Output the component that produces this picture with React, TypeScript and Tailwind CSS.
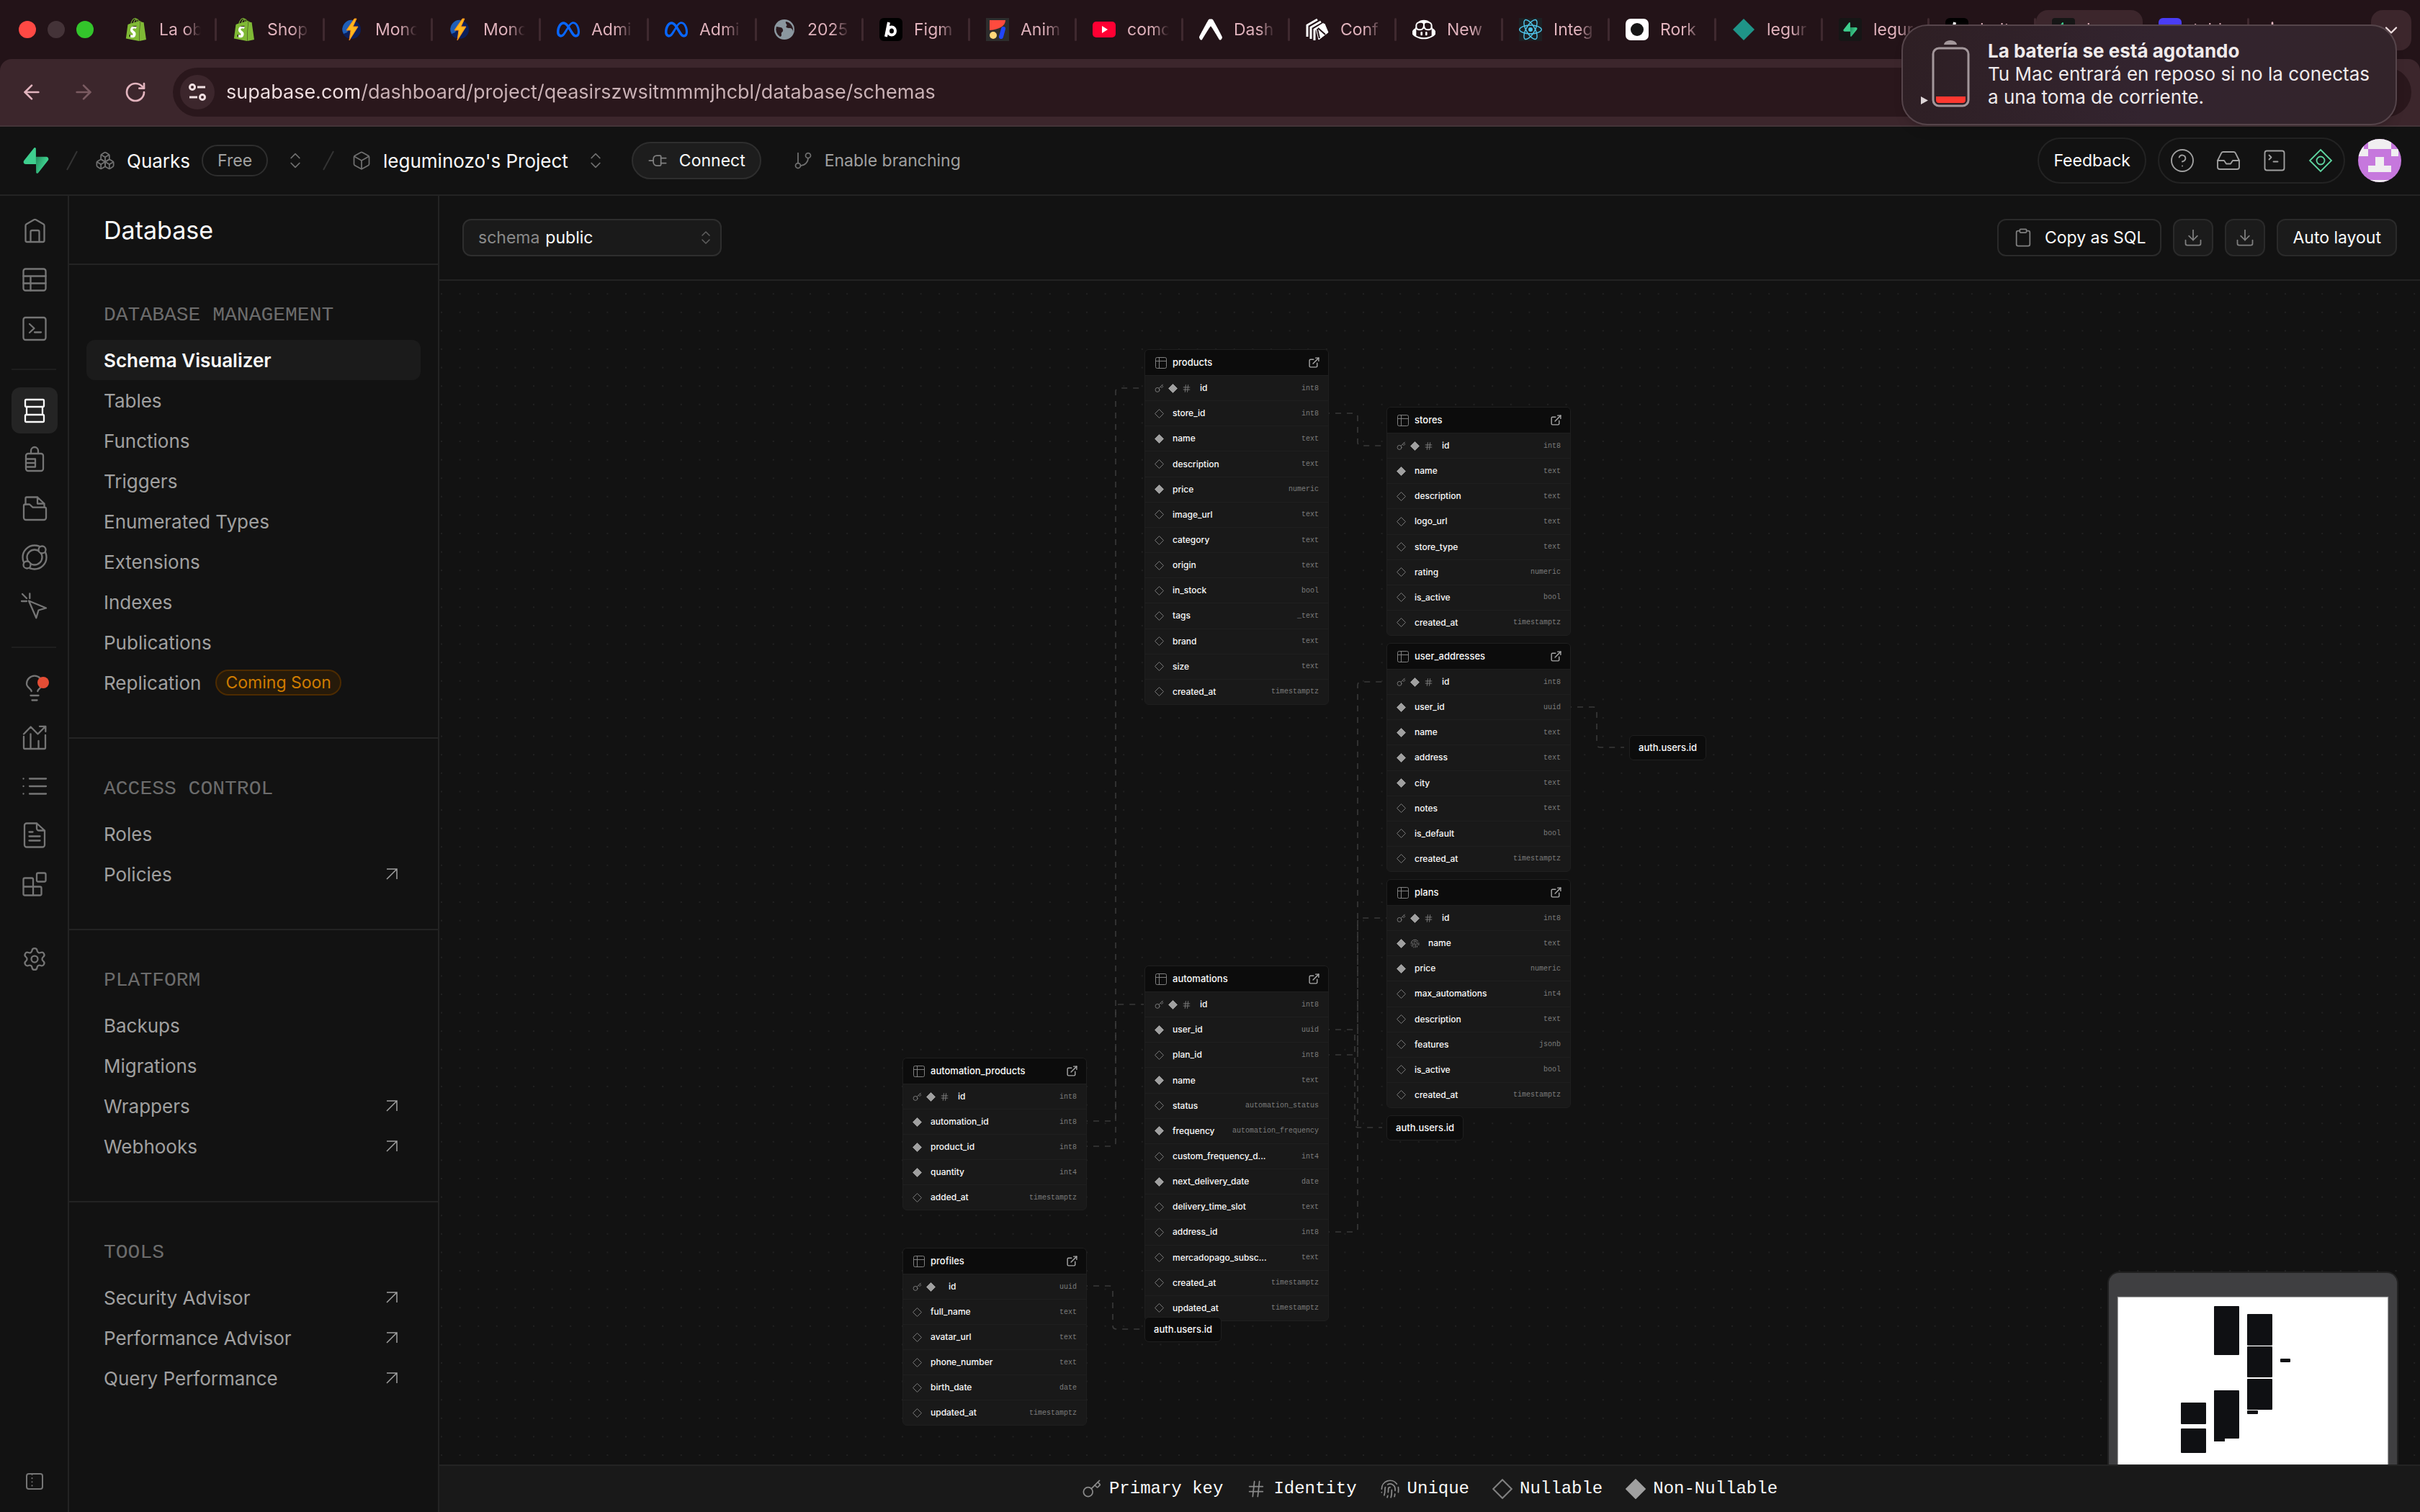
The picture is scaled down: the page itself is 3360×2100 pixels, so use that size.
import React from 'react';
import {
  ArrowLeft,
  ArrowRight,
  Box,
  Boxes,
  ChevronDown,
  ChevronsUpDown,
  CircleHelp,
  Clipboard,
  Download,
  ExternalLink,
  Fingerprint,
  GitBranch,
  Hash,
  Inbox,
  Key,
  Plug,
  Plus,
  RotateCw,
  Settings,
  SquareTerminal,
} from 'lucide-react';
import { SiExpo, SiGithubcopilot, SiMeta, SiReact, SiShopify } from 'react-icons/si';

/* ---------- logos ---------- */

const SupabaseLogo: React.FC<{ className?: string }> = ({ className }) => (
  <svg viewBox="0 0 109 113" className={className} fill="none">
    <path
      d="M63.7 110.3c-2.9 3.6-8.7 1.6-8.7-3L54 40.1h45.2c8.2 0 12.8 9.4 7.7 15.8L63.7 110.3Z"
      fill="url(#supabase-shade)"
    />
    <path
      d="M45.3 2.1c2.9-3.6 8.7-1.7 8.7 2.9l.5 67.3H9.8C1.6 72.3-2.9 62.8 2.2 56.4L45.3 2.1Z"
      fill="#3ecf8e"
    />
    <defs>
      <linearGradient id="supabase-shade" x1="53" y1="55" x2="94" y2="72" gradientUnits="userSpaceOnUse">
        <stop stopColor="#249361" />
        <stop offset="1" stopColor="#3ecf8e" />
      </linearGradient>
    </defs>
  </svg>
);

// White patch shows through the cut-out of the bag
const BagLogo = () => (
  <span className="relative flex size-8 items-center justify-center">
    <span className="absolute left-2 top-3 h-4 w-3 bg-white" />
    <SiShopify className="relative size-8 text-[#7fb935]" />
  </span>
);

const BoltLogo = () => (
  <svg viewBox="0 0 32 32" className="size-8">
    <circle cx="15" cy="16" r="13" fill="#0b1f5c" />
    <path d="M5 8a13 13 0 0 1 12-5L9 20 4 22A13 13 0 0 1 5 8Z" fill="#1f5fb8" />
    <path d="M19 1 8 17h6l-2 14 12-19h-7l5-11Z" fill="#ffb81c" stroke="#f58a1f" strokeWidth="1" />
  </svg>
);

const GlobeLogo = () => (
  <svg viewBox="0 0 32 32" className="size-8">
    <circle cx="16" cy="16" r="14" fill="#8b979f" />
    <path d="M5 12c4 1 8 0 9 4s-3 3-2 7c.5 2-1 3-2 3a12 12 0 0 1-5-14ZM18 5c-1 3 3 4 1 6s1 3 4 3 5 2 5 5a12 12 0 0 0-10-14Z" fill="#2a1a1f" />
  </svg>
);

const LetterLogo = () => (
  <svg viewBox="0 0 32 32" className="size-8">
    <rect width="32" height="32" rx="6" fill="#000" />
    <path d="M13 6 9 26" stroke="#fff" strokeWidth="4" />
    <ellipse cx="17" cy="18" rx="5" ry="5.500" fill="none" stroke="#fff" strokeWidth="4" />
  </svg>
);

const ShapesLogo = () => (
  <svg viewBox="0 0 32 32" className="size-8">
    <rect width="32" height="32" fill="#2d2d2d" />
    <path d="M5 3h22c0 8-9 13-22 14Z" fill="#ff4b3e" />
    <circle cx="10" cy="24" r="5" fill="#ffd77a" />
    <path d="M24 15 21 26" stroke="#2145ff" strokeWidth="6" strokeLinecap="round" />
  </svg>
);

const VideoLogo = () => (
  <svg viewBox="0 0 32 32" className="size-8">
    <rect y="5" width="32" height="22" rx="5" fill="#ff0033" />
    <path d="m13 11 8 5-8 5Z" fill="#fff" />
  </svg>
);

const StripesLogo = () => (
  <svg viewBox="0 0 32 32" className="size-8" fill="none" stroke="#fff" strokeWidth="3">
    <path d="M2 26V10L16 2M7 29V13l14-8M12 31V16l13-8" />
    <path d="m14 14 12-6 5 12-13 10Z" fill="#fff" strokeWidth="1" />
    <path d="m17 14 10 9M19 28l-3-13" stroke="#231318" strokeWidth="2" />
  </svg>
);

const RorkLogo = () => (
  <svg viewBox="0 0 32 32" className="size-8">
    <rect y="1" width="32" height="30" rx="7" fill="#fff" />
    <circle cx="16" cy="16" r="9" fill="#161616" />
  </svg>
);

const DiamondLogo = () => (
  <svg viewBox="0 0 32 32" className="size-8">
    <path d="m16 1 15 15-15 15L1 16Z" fill="#1f9488" />
  </svg>
);

const SupabaseTile = () => (
  <span className="flex size-8 items-center justify-center rounded-sm bg-[#161616]">
    <SupabaseLogo className="size-5" />
  </span>
);

/* ---------- browser chrome ---------- */

interface Tab {
  title: string;
  icon: React.ReactNode;
  active?: boolean;
}

const TABS: Tab[] = [
  { title: 'La ob', icon: <BagLogo /> },
  { title: 'Shop', icon: <BagLogo /> },
  { title: 'Mono', icon: <BoltLogo /> },
  { title: 'Mono', icon: <BoltLogo /> },
  { title: 'Admi', icon: <SiMeta className="size-8 text-[#0866ff]" /> },
  { title: 'Admi', icon: <SiMeta className="size-8 text-[#0866ff]" /> },
  { title: '2025', icon: <GlobeLogo /> },
  { title: 'Figm', icon: <LetterLogo /> },
  { title: 'Anim', icon: <ShapesLogo /> },
  { title: 'como', icon: <VideoLogo /> },
  { title: 'Dash', icon: <SiExpo className="size-8 text-white" /> },
  { title: 'Conf', icon: <StripesLogo /> },
  { title: 'New', icon: <SiGithubcopilot className="size-8 text-white" /> },
  { title: 'Integ', icon: <SiReact className="size-8 bg-[#1c2023] text-[#4fc3e8]" /> },
  { title: 'Rork', icon: <RorkLogo /> },
  { title: 'legur', icon: <DiamondLogo /> },
  { title: 'legur', icon: <SupabaseTile /> },
  { title: 'bolt', icon: <LetterLogo /> },
  { title: 'legu', icon: <SupabaseTile />, active: true },
  { title: 'tabl', icon: <span className="block size-8 rounded-md bg-[#4a3df5]" /> },
];

const TabStrip = () => (
  <div className="flex h-[82px] items-start bg-[#231318] pr-3">
    <div className="flex h-[82px] w-[151px] shrink-0 items-center gap-4 pl-[26px]">
      <span className="size-6 rounded-full bg-[#ff4944]" />
      <span className="size-6 rounded-full bg-[#443338]" />
      <span className="size-6 rounded-full bg-[#33c52b]" />
    </div>
    <div className="flex min-w-0 flex-1" role="tablist">
      {TABS.map((tab, i) => (
        <button
          key={i}
          role="tab"
          aria-selected={!!tab.active}
          className={`mt-[14px] flex h-[54px] shrink-0 items-center ${i < 6 ? 'w-[150px]' : 'w-[148px]'} ${
            tab.active ? 'rounded-2xl bg-[#3c262c]' : ''
          }`}
        >
          <span className="flex flex-1 items-center gap-4 pl-[22px]">
            <span className="shrink-0">{tab.icon}</span>
            <span className="w-[58px] whitespace-nowrap bg-[linear-gradient(90deg,#e2b4be_60%,transparent)] bg-clip-text text-left text-[23px] text-transparent">
              {tab.title}
            </span>
          </span>
          {!tab.active && <span className="h-8 w-[3px] rounded bg-[#3f292f]" />}
        </button>
      ))}
      <button aria-label="New tab" className="mt-[14px] flex h-[54px] w-16 items-center justify-center text-[#e2b4be]">
        <Plus className="size-8" />
      </button>
    </div>
    <button
      aria-label="Search tabs"
      className="mt-[14px] flex size-14 items-center justify-center rounded-2xl bg-[#3c262c] text-[#f0dfe1]"
    >
      <ChevronDown className="size-7" />
    </button>
  </div>
);

const AddressBar = () => (
  <div className="flex h-[94px] items-center gap-9 rounded-t-2xl border-b-2 border-[#443438] bg-[#3c262c] px-3 text-[#e2b4be]">
    <div className="flex shrink-0 items-center gap-10 pl-4">
      <button aria-label="Back">
        <ArrowLeft className="size-8" strokeWidth={2} />
      </button>
      <button aria-label="Forward" className="text-[#7b5b62]">
        <ArrowRight className="size-8" strokeWidth={2} />
      </button>
      <button aria-label="Reload">
        <RotateCw className="size-8" strokeWidth={2} />
      </button>
    </div>
    <div className="flex h-[68px] flex-1 items-center gap-4 rounded-full bg-[#2a171c] pl-[10px]">
      <button
        aria-label="Site information"
        className="flex size-12 shrink-0 items-center justify-center rounded-full bg-[#3c262c] text-[#f0dfe1]"
      >
        <svg viewBox="0 0 28 28" className="size-7" fill="none" stroke="currentColor" strokeWidth="3">
          <circle cx="7" cy="7" r="3.500" />
          <path d="M14 7h11M3 21h11" />
          <circle cx="21" cy="21" r="3.500" />
        </svg>
      </button>
      <input
        aria-label="Address"
        readOnly
        value="supabase.com/dashboard/project/qeasirszwsitmmmjhcbl/database/schemas"
        className="flex-1 bg-[linear-gradient(90deg,#f0dfe1_186px,#cbb3b7_186px)] bg-clip-text text-[27px] text-transparent outline-none"
      />
    </div>
  </div>
);

const BatteryNotification = () => (
  <div
    role="alert"
    className="absolute right-8 top-[34px] flex h-[140px] w-[688px] items-center rounded-[36px] border-2 border-[#56454b] bg-[linear-gradient(100deg,#2e1f24,#33242f_50%,#33242a)] pb-[2px] shadow-lg"
  >
    <svg viewBox="0 0 100 100" className="ml-[14px] h-[100px] w-[100px]" fill="none">
      <path d="m11 81 10 5.500-10 5.500Z" fill="#ddd5d7" />
      <path d="M43 9a9 6 0 0 1 18 0Z" fill="#a3979b" />
      <rect x="28" y="14" width="49" height="80" rx="8" stroke="#a3979b" strokeWidth="3" />
      <path d="M32 81h41v5a4 4 0 0 1-4 4H36a4 4 0 0 1-4-4Z" fill="#ff3830" />
    </svg>
    <div className="ml-1 text-[26px] leading-8 text-[#efeaeb]">
      <p className="font-bold">La batería se está agotando</p>
      <p>
        Tu Mac entrará en reposo si no la conectas
        <br />a una toma de corriente.
      </p>
    </div>
  </div>
);

/* ---------- dashboard header ---------- */

const Slash = () => (
  <svg viewBox="0 0 16 28" className="h-7 w-4" stroke="#333" strokeWidth="2">
    <path d="M15 1 1 27" />
  </svg>
);

const HEADER_BUTTON = 'flex size-16 items-center justify-center text-[#a0a0a0]';

const Avatar = () => (
  <svg viewBox="0 0 60 60" className="ml-[18px] size-[60px] rounded-full">
    <rect width="60" height="60" fill="#c678dd" />
    <path d="M14 0h32v14H14zM0 0h8v24H0zM4 14h10v10H4zM46 14h10v10H46zM24 25h12v12h10v9H14v-9h10zM10 57h40v3H10z" fill="#f0eef0" />
  </svg>
);

const Header = () => (
  <header className="flex h-24 shrink-0 items-center border-b-2 border-[#232323] pl-8 pr-[26px]">
    <SupabaseLogo className="h-9 w-9" />
    <div className="ml-6 flex items-center gap-6">
      <Slash />
      <a href="#org" className="flex items-center gap-4">
        <Boxes className="size-7 text-[#707070]" strokeWidth={1.5} />
        <span className="text-[26px] text-[#fafafa]">Quarks</span>
        <span className="flex h-11 items-center rounded-full border-2 border-[#2e2e2e] px-5 text-[23px] text-[#a0a0a0]">Free</span>
      </a>
      <button aria-label="Switch organization">
        <ChevronsUpDown className="size-7 text-[#707070]" strokeWidth={1.5} />
      </button>
    </div>
    <div className="ml-6 flex items-center gap-4">
      <Slash />
      <a href="#project" className="ml-2 flex items-center gap-4">
        <Box className="size-7 text-[#707070]" strokeWidth={1.5} />
        <span className="text-[26px] text-[#fafafa]">leguminozo's Project</span>
      </a>
      <button aria-label="Switch project" className="ml-2">
        <ChevronsUpDown className="size-7 text-[#707070]" strokeWidth={1.5} />
      </button>
    </div>
    <button className="ml-9 flex h-[52px] items-center gap-4 rounded-full border-2 border-[#2e2e2e] bg-[#1d1d1d] px-5 text-[23px] text-[#fafafa]">
      <Plug className="size-7 rotate-90 text-[#808080]" strokeWidth={1.5} />
      Connect
    </button>
    <button className="ml-11 flex items-center gap-4 text-[23px] text-[#a0a0a0]">
      <GitBranch className="size-7 text-[#707070]" strokeWidth={1.5} />
      Enable branching
    </button>
    <div className="ml-auto flex items-center">
      <button className="flex h-16 items-center rounded-full border-2 border-[#232323] px-5 text-[23px] text-[#fafafa]">
        Feedback
      </button>
      <div className="ml-4 flex h-16 items-center rounded-full border-2 border-[#232323]">
        <button aria-label="Help" className={HEADER_BUTTON}>
          <CircleHelp className="size-9" strokeWidth={1.25} />
        </button>
        <button aria-label="Inbox" className={HEADER_BUTTON}>
          <Inbox className="size-9" strokeWidth={1.25} />
        </button>
        <button aria-label="SQL editor" className={HEADER_BUTTON}>
          <SquareTerminal className="size-9" strokeWidth={1.25} />
        </button>
        <button aria-label="Advisor" className={HEADER_BUTTON}>
          <svg viewBox="0 0 36 36" className="size-9" fill="none" stroke="#5fd6a1" strokeWidth="1.800">
            <path d="M18 3 33 18 18 33 3 18Z" />
            <circle cx="18" cy="18" r="5.500" />
          </svg>
        </button>
      </div>
      <Avatar />
    </div>
  </header>
);

/* ---------- icon rail ---------- */

const RailIcon: React.FC<{ children: React.ReactNode }> = ({ children }) => (
  <svg
    viewBox="0 0 40 40"
    className="size-10"
    fill="none"
    stroke="currentColor"
    strokeWidth="2.300"
    strokeLinecap="round"
    strokeLinejoin="round"
  >
    {children}
  </svg>
);

interface RailItem {
  label: string;
  icon: React.ReactNode;
  active?: boolean;
  alert?: boolean;
}

const RAIL_GROUPS: RailItem[][] = [
  [
    {
      label: 'Home',
      icon: (
        <RailIcon>
          <path d="M7.500 13.500c0-1 .4-1.700 1.200-2.200l10.400-6c.9-.5 1.900-.5 2.800 0l10.400 6c.8.5 1.200 1.200 1.200 2.200V34a2 2 0 0 1-2 2H9.500a2 2 0 0 1-2-2Z" />
          <path d="M14.500 36V22a2 2 0 0 1 2-2h8a2 2 0 0 1 2 2v14" />
        </RailIcon>
      ),
    },
    {
      label: 'Table Editor',
      icon: (
        <RailIcon>
          <rect x="4.500" y="5.500" width="31" height="30" rx="3" />
          <path d="M4.500 15.500h31M4.500 25.500h31M14.500 15.500v20" />
        </RailIcon>
      ),
    },
    {
      label: 'SQL Editor',
      icon: (
        <RailIcon>
          <rect x="4.500" y="5" width="31" height="31" rx="3" />
          <path d="m13 14 6.500 6-6.500 6M20 25.500h9" />
        </RailIcon>
      ),
    },
  ],
  [
    {
      label: 'Database',
      active: true,
      icon: (
        <RailIcon>
          <rect x="7" y="5" width="26" height="10" rx="1.500" />
          <path d="M9 15v11M31 15v11" />
          <rect x="7" y="26" width="26" height="10" rx="1.500" />
        </RailIcon>
      ),
    },
    {
      label: 'Authentication',
      icon: (
        <RailIcon>
          <rect x="8" y="12" width="24" height="24" rx="3" />
          <path d="M15 12V8a5 5 0 0 1 10 0v4M8 19.500h13v11H8M8 25h13" />
        </RailIcon>
      ),
    },
    {
      label: 'Storage',
      icon: (
        <RailIcon>
          <path d="M7.500 14.500V6a1.500 1.500 0 0 1 1.500-1.500h15l9.500 9v5M24 4.500v9h9.500" />
          <path d="M5 16.500a2 2 0 0 1 2-2h6l4.500 4.200H34a2 2 0 0 1 2 2V33a3 3 0 0 1-3 3H8a3 3 0 0 1-3-3Z" />
        </RailIcon>
      ),
    },
    {
      label: 'Edge Functions',
      icon: (
        <RailIcon>
          <circle cx="20" cy="20" r="16.500" />
          <circle cx="20" cy="20" r="10.500" />
          <circle cx="30.500" cy="9.500" r="5" fill="#121212" />
          <circle cx="9.500" cy="30.500" r="5" fill="#121212" />
        </RailIcon>
      ),
    },
    {
      label: 'Realtime',
      icon: (
        <RailIcon>
          <path d="m12 12.500 24 10-10.500 3-3.200 10.700ZM3 3l6 6M13.300 2.500v6.500M2 13h7" />
        </RailIcon>
      ),
    },
  ],
  [
    {
      label: 'Advisors',
      alert: true,
      icon: (
        <RailIcon>
          <path d="M15.700 24C15 20.500 9 18.500 9 13.700a11 11 0 0 1 22 0C31 18.500 25 20.500 24.300 24M14.500 30h11M16.500 36.500h7" />
        </RailIcon>
      ),
    },
    {
      label: 'Reports',
      icon: (
        <RailIcon>
          <path d="M5 19v15.500a1.500 1.500 0 0 0 1.500 1.500h27a1.500 1.500 0 0 0 1.500-1.500V17M14.500 15.500V36M25.500 25v11" />
          <path d="m5 15.500 9.700-10 9.800 10L35 5M27 4.800h8.300V12" />
        </RailIcon>
      ),
    },
    {
      label: 'Logs',
      icon: (
        <RailIcon>
          <path d="M13 9.500h23M13 20h23M13 30.500h23M4.500 9.500h.1M4.500 20h.1M4.500 30.500h.1" />
        </RailIcon>
      ),
    },
    {
      label: 'API Docs',
      icon: (
        <RailIcon>
          <path d="M23 3.500H9a3 3 0 0 0-3 3v27a3 3 0 0 0 3 3h22a3 3 0 0 0 3-3v-20ZM23 3.500v7a3 3 0 0 0 3 3h8" />
          <path d="M12.500 15.500h5M12.500 21.500h15M12.500 27.500h15" />
        </RailIcon>
      ),
    },
    {
      label: 'Integrations',
      icon: (
        <RailIcon>
          <path d="M18 23.500V13.500a2 2 0 0 0-2-2H6.500a2 2 0 0 0-2 2v20a2 2 0 0 0 2 2h21a2 2 0 0 0 2-2v-8a2 2 0 0 0-2-2h-23M18 23.500v12" />
          <rect x="23" y="4.500" width="12.500" height="12" rx="2" />
        </RailIcon>
      ),
    },
  ],
];

const Rail = () => (
  <nav className="flex w-24 shrink-0 flex-col border-r-2 border-[#232323] pb-[10px] pl-4 pt-4 text-[#757575]">
    {RAIL_GROUPS.map((group, i) => (
      <React.Fragment key={i}>
        {i > 0 && <hr className="my-6 mr-4 border-t-2 border-[#1e1e1e]" />}
        <div className="flex flex-col gap-1">
          {group.map((item) => (
            <a
              key={item.label}
              href="#section"
              aria-label={item.label}
              className={`relative flex size-16 items-center justify-center rounded-xl ${item.active ? 'bg-[#242424] text-[#fafafa]' : ''}`}
            >
              {item.icon}
              {item.alert && <span className="absolute right-3 top-4 size-4 rounded-full bg-[#e54d35]" />}
            </a>
          ))}
        </div>
      </React.Fragment>
    ))}
    <a href="#settings" aria-label="Settings" className="mt-10 flex size-16 items-center justify-center">
      <Settings className="size-9" strokeWidth={1.5} />
    </a>
    <button aria-label="Collapse sidebar" className="mt-auto flex size-16 items-center justify-center">
      <RailIcon>
        <rect x="9" y="9" width="22" height="21" rx="3" strokeWidth="2" />
        <path d="M16.500 10v20" strokeWidth="2" strokeDasharray="0.100 5" />
      </RailIcon>
    </button>
  </nav>
);

/* ---------- database menu ---------- */

interface MenuItem {
  label: string;
  active?: boolean;
  external?: boolean;
  badge?: string;
}

const MENU: { title: string; items: MenuItem[] }[] = [
  {
    title: 'Database Management',
    items: [
      { label: 'Schema Visualizer', active: true },
      { label: 'Tables' },
      { label: 'Functions' },
      { label: 'Triggers' },
      { label: 'Enumerated Types' },
      { label: 'Extensions' },
      { label: 'Indexes' },
      { label: 'Publications' },
      { label: 'Replication', badge: 'Coming Soon' },
    ],
  },
  { title: 'Access Control', items: [{ label: 'Roles' }, { label: 'Policies', external: true }] },
  {
    title: 'Platform',
    items: [
      { label: 'Backups' },
      { label: 'Migrations' },
      { label: 'Wrappers', external: true },
      { label: 'Webhooks', external: true },
    ],
  },
  {
    title: 'Tools',
    items: [
      { label: 'Security Advisor', external: true },
      { label: 'Performance Advisor', external: true },
      { label: 'Query Performance', external: true },
    ],
  },
];

const DatabaseMenu = () => (
  <aside className="w-[514px] shrink-0 border-r-2 border-[#232323]">
    <h1 className="flex h-24 items-center border-b-2 border-[#232323] px-12 text-[34px] text-[#fafafa]">Database</h1>
    {MENU.map((section, i) => (
      <section key={section.title} className={`px-6 py-12 ${i > 0 ? 'border-t-2 border-[#232323]' : ''}`}>
        <h2 className="mb-3 px-6 font-['Liberation_Mono',monospace] text-[28px] uppercase leading-[44px] text-[#6c6c6c]">
          {section.title}
        </h2>
        <ul>
          {section.items.map((item) => (
            <li key={item.label}>
              <a
                href="#menu"
                className={`flex h-14 items-center rounded-xl px-6 text-[26px] ${
                  item.active ? 'bg-[#1b1b1b] font-semibold text-[#fafafa]' : 'text-[#a0a0a0]'
                }`}
              >
                {item.label}
                {item.badge && (
                  <span className="ml-5 rounded-full border-2 border-[#4d2b00] bg-[#261a0a] px-3 text-[23px] leading-8 text-[#cf7c00]">
                    {item.badge}
                  </span>
                )}
                {item.external && (
                  <svg viewBox="0 0 16 16" className="ml-auto mr-2 size-4" fill="none" stroke="#a0a0a0" strokeWidth="1.500">
                    <path d="M1 1h14v14M15 1 1 15" />
                  </svg>
                )}
              </a>
            </li>
          ))}
        </ul>
      </section>
    ))}
  </aside>
);

/* ---------- schema graph ---------- */

// k = primary key, # = identity, u = unique, n = nullable, x = non-nullable
type Column = [flags: string, name: string, type: string];

interface TableNode {
  name: string;
  place: string;
  columns: Column[];
}

const TABLES: TableNode[] = [
  {
    name: 'products',
    place: 'left-[979px] top-[95px] h-[494px]',
    columns: [
      ['kx#', 'id', 'int8'],
      ['n', 'store_id', 'int8'],
      ['x', 'name', 'text'],
      ['n', 'description', 'text'],
      ['x', 'price', 'numeric'],
      ['n', 'image_url', 'text'],
      ['n', 'category', 'text'],
      ['n', 'origin', 'text'],
      ['n', 'in_stock', 'bool'],
      ['n', 'tags', '_text'],
      ['n', 'brand', 'text'],
      ['n', 'size', 'text'],
      ['n', 'created_at', 'timestamptz'],
    ],
  },
  {
    name: 'stores',
    place: 'left-[1315px] top-[175px] h-[318px]',
    columns: [
      ['kx#', 'id', 'int8'],
      ['x', 'name', 'text'],
      ['n', 'description', 'text'],
      ['n', 'logo_url', 'text'],
      ['n', 'store_type', 'text'],
      ['n', 'rating', 'numeric'],
      ['n', 'is_active', 'bool'],
      ['n', 'created_at', 'timestamptz'],
    ],
  },
  {
    name: 'user_addresses',
    place: 'left-[1315px] top-[503px] h-[318px]',
    columns: [
      ['kx#', 'id', 'int8'],
      ['x', 'user_id', 'uuid'],
      ['x', 'name', 'text'],
      ['x', 'address', 'text'],
      ['x', 'city', 'text'],
      ['n', 'notes', 'text'],
      ['n', 'is_default', 'bool'],
      ['n', 'created_at', 'timestamptz'],
    ],
  },
  {
    name: 'plans',
    place: 'left-[1315px] top-[831px] h-[318px]',
    columns: [
      ['kx#', 'id', 'int8'],
      ['xu', 'name', 'text'],
      ['x', 'price', 'numeric'],
      ['n', 'max_automations', 'int4'],
      ['n', 'description', 'text'],
      ['n', 'features', 'jsonb'],
      ['n', 'is_active', 'bool'],
      ['n', 'created_at', 'timestamptz'],
    ],
  },
  {
    name: 'automations',
    place: 'left-[979px] top-[951px] h-[494px]',
    columns: [
      ['kx#', 'id', 'int8'],
      ['x', 'user_id', 'uuid'],
      ['n', 'plan_id', 'int8'],
      ['x', 'name', 'text'],
      ['n', 'status', 'automation_status'],
      ['x', 'frequency', 'automation_frequency'],
      ['n', 'custom_frequency_d...', 'int4'],
      ['x', 'next_delivery_date', 'date'],
      ['n', 'delivery_time_slot', 'text'],
      ['n', 'address_id', 'int8'],
      ['n', 'mercadopago_subsc...', 'text'],
      ['n', 'created_at', 'timestamptz'],
      ['n', 'updated_at', 'timestamptz'],
    ],
  },
  {
    name: 'automation_products',
    place: 'left-[643px] top-[1079px] h-[212px]',
    columns: [
      ['kx#', 'id', 'int8'],
      ['x', 'automation_id', 'int8'],
      ['x', 'product_id', 'int8'],
      ['x', 'quantity', 'int4'],
      ['n', 'added_at', 'timestamptz'],
    ],
  },
  {
    name: 'profiles',
    place: 'left-[643px] top-[1343px] h-[247px]',
    columns: [
      ['kx', 'id', 'uuid'],
      ['n', 'full_name', 'text'],
      ['n', 'avatar_url', 'text'],
      ['n', 'phone_number', 'text'],
      ['n', 'birth_date', 'date'],
      ['n', 'updated_at', 'timestamptz'],
    ],
  },
];

const FOREIGN_NODES = ['left-[1652px] top-[631px]', 'left-[1315px] top-[1159px]', 'left-[979px] top-[1439px]'];

// Smooth-step edges, in canvas coordinates
const EDGES = [
  'M892 1202H934Q939 1202 939 1197V154Q939 149 944 149H978',
  'M892 1167H934Q939 1167 939 1162V1010Q939 1005 944 1005H978',
  'M1228 184H1270Q1275 184 1275 189V224Q1275 229 1280 229H1315',
  'M1228 1321H1270Q1275 1321 1275 1316V562Q1275 557 1280 557H1315',
  'M1228 1075H1270Q1275 1075 1275 1070V890Q1275 885 1280 885H1315',
  'M1228 1040H1266Q1271 1040 1271 1045V1171Q1271 1176 1276 1176H1309',
  'M1564 592H1602Q1607 592 1607 597V643Q1607 648 1612 648H1645',
  'M892 1396H930Q935 1396 935 1401V1451Q935 1456 940 1456H973',
];

const ColumnIcon: React.FC<{ flag: string; className: string }> = ({ flag, className }) => {
  if (flag === 'k') return <Key className={`${className} text-[#8a8a8a]`} strokeWidth={1.5} />;
  if (flag === '#') return <Hash className={`${className} text-[#8a8a8a]`} strokeWidth={1.5} />;
  if (flag === 'u') return <Fingerprint className={`${className} text-[#8a8a8a]`} strokeWidth={1.5} />;
  return (
    <svg viewBox="0 0 24 24" className={className} stroke={flag === 'x' ? '#a0a0a0' : '#808080'} strokeWidth="1.800">
      <path d="M12 1 23 12 12 23 1 12Z" fill={flag === 'x' ? '#a0a0a0' : 'none'} />
    </svg>
  );
};

const TableCard: React.FC<{ table: TableNode }> = ({ table }) => (
  <article
    className={`absolute flex w-64 flex-col overflow-hidden rounded-md border border-[#1f1f1f] bg-[#191919] ${table.place}`}
  >
    <h3 className="flex h-[35px] shrink-0 items-center gap-2 bg-[#0c0c0c] pl-[14px] pr-[11px] text-[13px] font-medium text-[#fafafa]">
      <svg viewBox="0 0 16 16" className="size-4" fill="none" stroke="#808080">
        <rect x="0.500" y="0.500" width="15" height="15" rx="2" />
        <path d="M0.500 5.500h15M5.500 .5v15" />
      </svg>
      {table.name}
      <a href="#table" aria-label={`Open ${table.name}`} className="ml-auto">
        <ExternalLink className="size-[17px] text-[#a8a8a8]" strokeWidth={2} />
      </a>
    </h3>
    <ul className="flex flex-1 flex-col">
      {table.columns.map(([flags, name, type]) => (
        <li key={name} className="flex flex-1 items-center border-t border-[#1f1f1f] pr-[13px]">
          <span className={`ml-[13px] mr-3 flex gap-[6px] ${flags[0] === 'k' ? 'min-w-[38px]' : ''}`}>
            {flags.split('').map((flag) => (
              <ColumnIcon key={flag} flag={flag} className="size-[13px]" />
            ))}
          </span>
          <span className="text-[12px] font-medium text-[#fafafa]">{name}</span>
          <span className="ml-auto font-['Liberation_Mono',monospace] text-[10px] text-[#7c7c7c]">{type}</span>
        </li>
      ))}
    </ul>
  </article>
);

const MiniMap = () => (
  <div className="absolute bottom-0 right-[30px] h-[268px] w-[404px] overflow-hidden rounded-t-2xl border-2 border-b-0 border-[#212121] bg-[#3f3f41]">
    <svg viewBox="0 0 1200 798" className="h-[266px] w-[400px]">
      <rect x="37" y="100" width="1126" height="800" fill="#fff" stroke="#999" strokeWidth="3" />
      <g fill="#0f1013">
        <rect x="438" y="138" width="105" height="204" rx="3" />
        <rect x="576" y="171" width="105" height="131" rx="3" />
        <rect x="576" y="306" width="105" height="129" rx="3" />
        <rect x="576" y="441" width="105" height="129" rx="3" />
        <rect x="714" y="357" width="42" height="15" rx="3" />
        <rect x="576" y="573" width="45" height="15" rx="3" />
        <rect x="438" y="489" width="105" height="201" rx="3" />
        <rect x="438" y="680" width="45" height="22" />
        <rect x="300" y="540" width="105" height="90" rx="3" />
        <rect x="300" y="648" width="105" height="102" rx="3" />
      </g>
    </svg>
  </div>
);

const LEGEND = [
  { flag: 'k', label: 'Primary key' },
  { flag: '#', label: 'Identity' },
  { flag: 'u', label: 'Unique' },
  { flag: 'n', label: 'Nullable' },
  { flag: 'x', label: 'Non-Nullable' },
];

const TOOL_BUTTON = 'flex h-[52px] items-center rounded-xl border-2 border-[#2a2a2a] text-[23px] text-[#fafafa]';

const SchemaVisualizer = () => (
  <main className="flex min-w-0 flex-1 flex-col">
    <div className="flex h-[118px] shrink-0 items-center gap-4 border-b-2 border-[#232323] px-8">
      <div className="mr-auto flex h-[52px] w-[360px] items-center gap-2 rounded-xl border-2 border-[#2e2e2e] bg-[#1a1a1a] pl-5 pr-2 text-[23px]">
        <label htmlFor="schema" className="text-[#8a8a8a]">
          schema
        </label>
        <select id="schema" className="flex-1 appearance-none bg-transparent text-[#fafafa] outline-none">
          <option>public</option>
        </select>
        <ChevronsUpDown className="pointer-events-none size-6 text-[#606060]" strokeWidth={1.5} />
      </div>
      <button className={`${TOOL_BUTTON} gap-4 px-5`}>
        <Clipboard className="size-7 text-[#808080]" strokeWidth={1.5} />
        Copy as SQL
      </button>
      <button aria-label="Download SVG" className={`${TOOL_BUTTON} w-14 justify-center bg-[#1b1b1b]`}>
        <Download className="size-7 text-[#808080]" strokeWidth={1.5} />
      </button>
      <button aria-label="Download PNG" className={`${TOOL_BUTTON} w-14 justify-center bg-[#1b1b1b]`}>
        <Download className="size-7 text-[#808080]" strokeWidth={1.5} />
      </button>
      <button className={`${TOOL_BUTTON} bg-[#1b1b1b] px-5`}>Auto layout</button>
    </div>

    <div className="relative flex-1 overflow-hidden">
      <svg className="absolute inset-0 size-full" fill="none">
        <defs>
          <pattern id="dots" x="2" y="17.200" width="25.600" height="25.600" patternUnits="userSpaceOnUse">
            <circle cx="1" cy="1" r="1" fill="#262626" />
          </pattern>
        </defs>
        <rect width="100%" height="100%" fill="url(#dots)" />
        {EDGES.map((d) => (
          <path key={d} d={d} stroke="#3a3a3a" strokeWidth="1.600" strokeDasharray="8 8" />
        ))}
      </svg>
      {TABLES.map((table) => (
        <TableCard key={table.name} table={table} />
      ))}
      {FOREIGN_NODES.map((place) => (
        <div
          key={place}
          className={`absolute flex h-[35px] items-center rounded-md border border-[#1f1f1f] bg-[#0c0c0c] px-3 text-[13px] font-medium text-[#fafafa] ${place}`}
        >
          auth.users.id
        </div>
      ))}
      <MiniMap />
    </div>

    <footer className="flex h-[66px] shrink-0 items-center justify-center gap-8 border-t-2 border-[#232323] bg-[#191919] font-['Liberation_Mono',monospace] text-[24px] text-[#fafafa]">
      {LEGEND.map((item) => (
        <span key={item.label} className="flex items-center gap-[10px]">
          <ColumnIcon flag={item.flag} className="size-7" />
          {item.label}
        </span>
      ))}
    </footer>
  </main>
);

export default function App() {
  return (
    <div className="relative flex h-screen flex-col overflow-hidden bg-[#121212] font-['Inter',sans-serif]">
      <div className="shrink-0 bg-[#231318]">
        <TabStrip />
        <AddressBar />
      </div>
      <Header />
      <div className="flex min-h-0 flex-1">
        <Rail />
        <DatabaseMenu />
        <SchemaVisualizer />
      </div>
      <BatteryNotification />
    </div>
  );
}
